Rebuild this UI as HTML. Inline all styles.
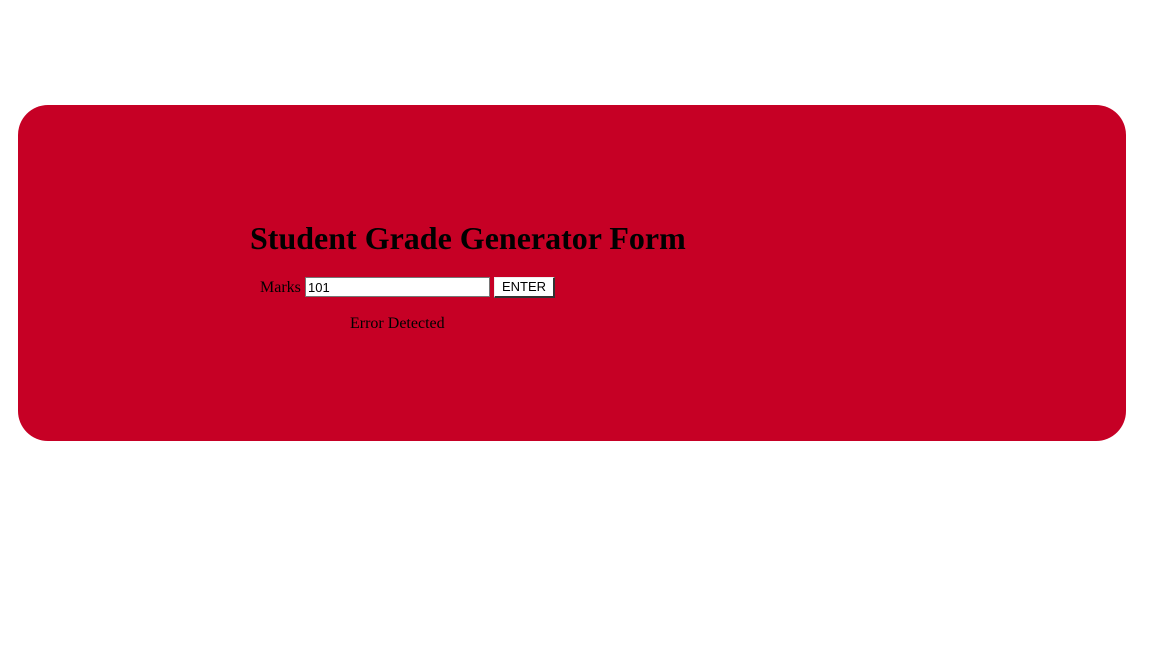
<!DOCTYPE html>
<html><head><meta charset="utf-8"><style>
html,body{margin:0;padding:0;background:#fff;width:1172px;height:645px;overflow:hidden;font-family:"Liberation Serif",serif;}
.box{position:absolute;left:18px;top:105px;width:1108px;height:336px;background:#c60025;border-radius:30px;}
.abs{position:absolute;white-space:nowrap;color:#000;}
h1{margin:0;font-size:32px;font-weight:bold;line-height:37px;}
.in{position:absolute;left:305px;top:277px;height:18px;background:#fff;border:1px solid #767676;font:13px "Liberation Sans",sans-serif;line-height:19px;padding:0 2px;box-sizing:content-box;width:179px;}
.btn{position:absolute;left:494px;top:277px;background:#fff;border:solid;border-color:#eee #333 #333 #eee;font:13px "Liberation Sans",sans-serif;line-height:18px;text-align:center;box-sizing:content-box;width:58px;height:18px;border-width:1px 2px 2px 1px;}
</style></head><body>
<div class="box"></div>
<div class="abs" style="left:250px;top:220px;"><h1>Student Grade Generator Form</h1></div>
<div class="abs" style="left:260px;top:278px;font-size:16px;line-height:20px;">Marks</div>
<div class="in">101</div>
<div class="btn">ENTER</div>
<div class="abs" style="left:350px;top:314px;font-size:16px;line-height:20px;">Error Detected</div>
</body></html>
